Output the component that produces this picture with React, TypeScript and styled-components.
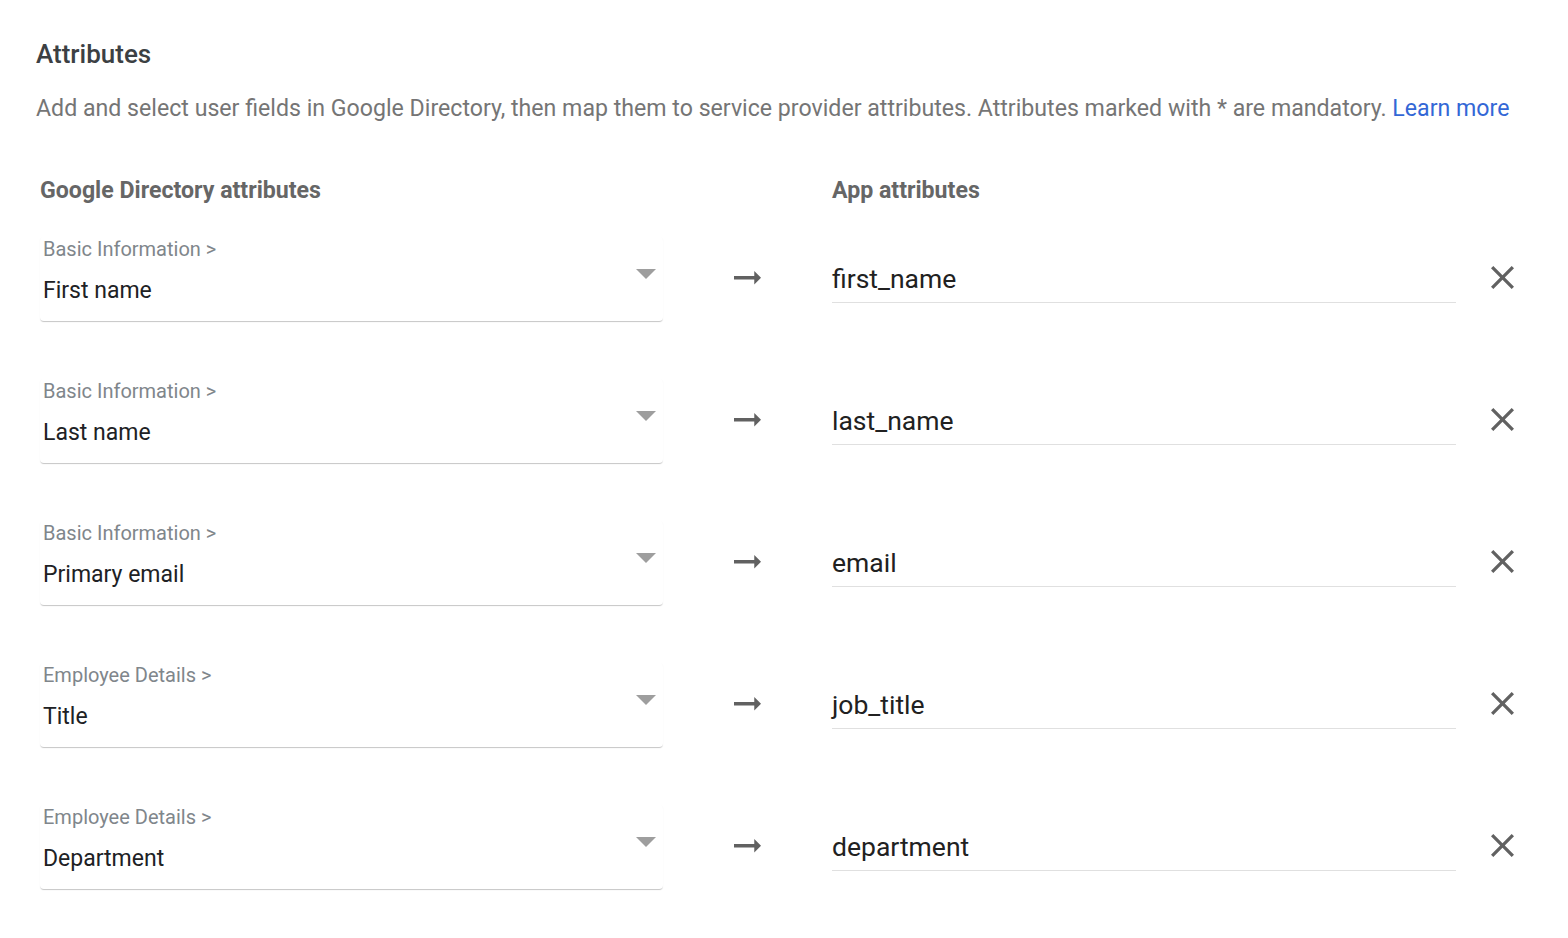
import { createGlobalStyle, styled } from "styled-components"

const GlobalStyle = createGlobalStyle`
    * {
        box-sizing: border-box;
    }

    body {
        margin: 0;
        background-color: white;
        font-family: Roboto, "Noto Sans", Arial, sans-serif;
    }
`

const Page = styled.div`
    padding: 38px 0 40px 36px;
`

const Title = styled.h2`
    margin: 0;
    font-size: 26px;
    line-height: 32px;
    font-weight: 500;
    color: #3c4043;
`

const Description = styled.p`
    margin: 25px 0 0;
    font-size: 23.15px;
    line-height: 28px;
    color: #757575;
    white-space: nowrap;

    a {
        color: #3367d6;
        text-decoration: none;
    }
`

const Mapping = styled.div`
    display: grid;
    grid-template-columns: 623px 169px 624px 92px;
    row-gap: 58px;
    margin: 54px 0 0 4px;
`

const HeaderRow = styled.div`
    display: contents;
`

const ColumnTitle = styled.div<{ $column: number }>`
    grid-column: ${props => props.$column};
    font-size: 23.15px;
    line-height: 28px;
    font-weight: 700;
    color: #666666;
    margin-bottom: -26px;
`

const Select = styled.div`
    grid-column: 1;
    display: flex;
    align-items: flex-start;
    padding: 0 0 16px 3px;
    background-color: white;
    border-radius: 4px;
    box-shadow: 0 2px 1px -1px rgba(0, 0, 0, 0.14), 0 1px 1px -0.5px rgba(0, 0, 0, 0.1);
`

const SelectText = styled.div`
    flex: 1;
`

const Group = styled.div`
    font-size: 20px;
    line-height: 24px;
    color: #80868b;
`

const Value = styled.div`
    margin-top: 16px;
    font-size: 23px;
    line-height: 28px;
    color: #202124;
`

const Caret = styled.svg`
    margin: 32px 7px 0 0;
    fill: #9e9e9e;
`

const ArrowCell = styled.div`
    grid-column: 2;
    display: flex;
    justify-content: center;
    padding: 34px 1px 0 0;
    color: #616161;
`

const Field = styled.div`
    grid-column: 3;
    margin-top: 26px;
    align-self: start;
    padding-bottom: 7px;
    border-bottom: 1px solid #e0e0e0;
    font-size: 26.5px;
    line-height: 32px;
    color: #212121;
`

const RemoveButton = styled.button`
    grid-column: 4;
    align-self: start;
    justify-self: center;
    margin: 29px 0 0 1px;
    padding: 0;
    border: none;
    background: none;
    color: #616161;
    cursor: pointer;
    display: flex;
`

interface Attribute {
    group: string
    name: string
    appName: string
}

const attributes: Attribute[] = [
    { group: "Basic Information >", name: "First name", appName: "first_name" },
    { group: "Basic Information >", name: "Last name", appName: "last_name" },
    { group: "Basic Information >", name: "Primary email", appName: "email" },
    { group: "Employee Details >", name: "Title", appName: "job_title" },
    { group: "Employee Details >", name: "Department", appName: "department" },
]

function AttributeRow(props: Attribute) {
    return (
        <>
            <Select>
                <SelectText>
                    <Group>{props.group}</Group>
                    <Value>{props.name}</Value>
                </SelectText>
                <Caret width="20" height="10" viewBox="7 10 10 5">
                    <path d="M7 10l5 5 5-5z" />
                </Caret>
            </Select>

            <ArrowCell>
                <svg width="27" height="13.5" viewBox="4 8 16 8" fill="currentColor">
                    <path d="M16.01 11H4v2h12.01v3L20 12l-3.99-4z" />
                </svg>
            </ArrowCell>

            <Field>{props.appName}</Field>

            <RemoveButton aria-label="Remove">
                <svg width="23" height="23" viewBox="5 5 14 14" fill="currentColor">
                    <path d="M19 6.41L17.59 5 12 10.59 6.41 5 5 6.41 10.59 12 5 17.59 6.41 19 12 13.41 17.59 19 19 17.59 13.41 12z" />
                </svg>
            </RemoveButton>
        </>
    )
}

export default function App() {
    return (
        <Page>
            <GlobalStyle />
            <Title>Attributes</Title>
            <Description>
                Add and select user fields in Google Directory, then map them to service provider attributes. Attributes marked with * are mandatory. <a href="#">Learn more</a>
            </Description>

            <Mapping>
                <HeaderRow>
                    <ColumnTitle $column={1}>Google Directory attributes</ColumnTitle>
                    <ColumnTitle $column={3}>App attributes</ColumnTitle>
                </HeaderRow>
                {attributes.map(attribute => (
                    <AttributeRow key={attribute.appName} {...attribute} />
                ))}
            </Mapping>
        </Page>
    )
}
